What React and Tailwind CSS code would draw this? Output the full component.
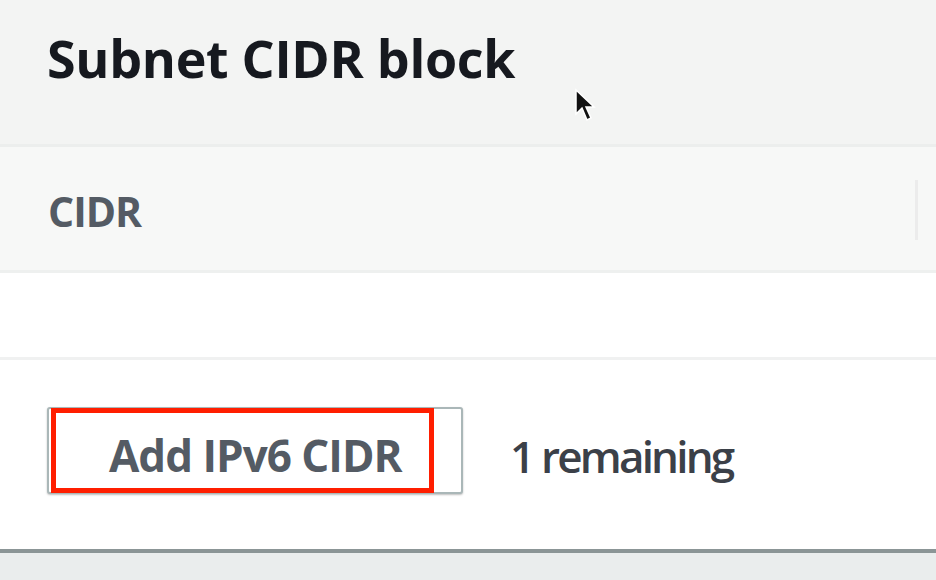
export default function App() {
  return (
    <div
      className="w-[936px] h-[580px] overflow-hidden bg-[#eaeded] flex flex-col relative"
      style={{ fontFamily: '"Open Sans", "Noto Sans", sans-serif' }}
    >
      {/* header */}
      <div className="h-[147px] bg-[#f3f4f3] border-b-[3px] border-[#eceeed] px-[47px] pt-[22px]">
        <h2 className="text-[52px] leading-[72px] font-bold text-[#16191f] tracking-[-0.3px]">
          Subnet CIDR block
        </h2>
      </div>

      {/* table head */}
      <div className="h-[126px] bg-[#f7f8f7] border-b-[3px] border-[#eef0ef] flex items-center justify-between pl-[48px] pr-[18px]">
        <span className="text-[41px] font-bold text-[#545b64] tracking-[-1px] pt-[6px]">CIDR</span>
        <div className="w-[3px] h-[60px] bg-[#ececec] mt-[2px]" />
      </div>

      {/* empty row */}
      <div className="h-[87px] bg-white border-b-[3px] border-[#f0f1f1]" />

      {/* footer row */}
      <div className="h-[193px] bg-white border-b-[4px] border-[#8b9596] flex items-center pl-[47px] pb-[8px]">
        <button className="relative w-[416px] h-[87px] bg-white border-[2px] border-[#aab7b8] rounded-[3px] shadow-[0_1px_2px_rgba(0,0,0,0.25)] text-left pl-[60px] pt-[8px]">
          <span className="text-[44px] font-bold text-[#545b64] tracking-[-1px]">Add IPv6 CIDR</span>
          <span className="absolute left-[2px] top-[-1px] w-[383px] h-[85px] border-[5px] border-[#ff1e00]" />
        </button>
        <span className="ml-[47px] pt-[10px] text-[44px] font-semibold text-[#3b4048] tracking-[-2.8px]">1 remaining</span>
      </div>

      {/* cursor */}
      <svg
        className="absolute left-[574px] top-[88px]"
        width="22"
        height="36"
        viewBox="0 0 22 36"
      >
        <path d="M2 2 L2 26 L8 20 L13 32 L17 30 L12 19 L20 19 Z" fill="#111" stroke="#fff" strokeWidth="1.5" />
      </svg>
    </div>
  );
}
